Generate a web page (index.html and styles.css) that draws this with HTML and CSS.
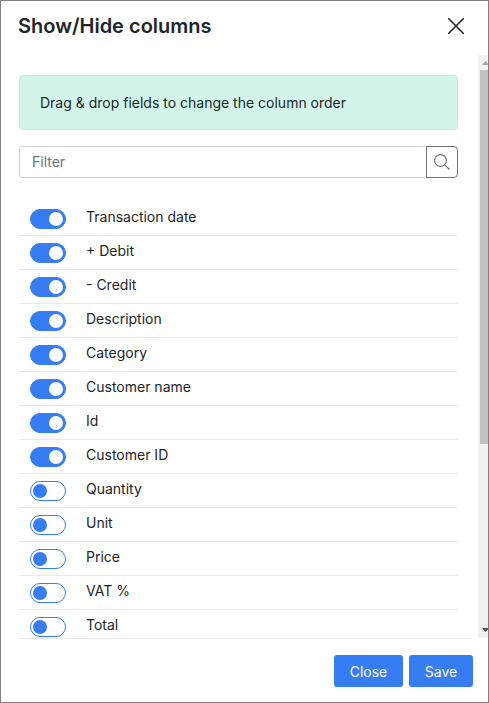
FILE: index.html
```html
<!DOCTYPE html>
<html lang="en">
<head>
<meta charset="utf-8">
<title>Show/Hide columns</title>
<link rel="stylesheet" href="styles.css">
</head>
<body>
<div class="modal">
  <header class="modal-header">
    <h1 class="title">Show/Hide columns</h1>
    <svg class="close-icon" width="16" height="16" viewBox="0 0 16 16" fill="none" stroke="#212529" stroke-width="1.6" stroke-linecap="round"><path d="M.8.8l14.4 14.4M15.2.8L.8 15.2"/></svg>
  </header>
  <div class="modal-body">
    <div class="content">
      <div class="alert">Drag &amp; drop fields to change the column order</div>
      <div class="search">
        <input class="filter" type="text" placeholder="Filter">
        <button class="search-btn" aria-label="Search"><svg width="16" height="16" viewBox="0 0 16 16" fill="none" stroke="#6c757d" stroke-width="1.2"><circle cx="6.5" cy="6.5" r="5.9"/><path d="M10.8 10.8l4.7 4.7"/></svg></button>
      </div>
      <ul class="list">
        <li class="row"><span class="toggle on"></span><span class="label">Transaction date</span></li>
        <li class="row"><span class="toggle on"></span><span class="label">+ Debit</span></li>
        <li class="row"><span class="toggle on"></span><span class="label">- Credit</span></li>
        <li class="row"><span class="toggle on"></span><span class="label">Description</span></li>
        <li class="row"><span class="toggle on"></span><span class="label">Category</span></li>
        <li class="row"><span class="toggle on"></span><span class="label">Customer name</span></li>
        <li class="row"><span class="toggle on"></span><span class="label">Id</span></li>
        <li class="row"><span class="toggle on"></span><span class="label">Customer ID</span></li>
        <li class="row"><span class="toggle"></span><span class="label">Quantity</span></li>
        <li class="row"><span class="toggle"></span><span class="label">Unit</span></li>
        <li class="row"><span class="toggle"></span><span class="label">Price</span></li>
        <li class="row"><span class="toggle"></span><span class="label">VAT %</span></li>
        <li class="row"><span class="toggle"></span><span class="label">Total</span></li>
      </ul>
    </div>
    <div class="scrollbar">
      <svg class="arrow" width="8" height="15" viewBox="0 0 8 15"><path d="M2 10l3.5-4L9 10z" fill="#a3a3a3"/></svg>
      <div class="thumb"></div>
      <svg class="arrow" width="8" height="15" viewBox="0 0 8 15"><path d="M2 5h7l-3.5 4z" fill="#505050"/></svg>
    </div>
  </div>
  <footer class="modal-footer">
    <button class="btn btn-close">Close</button>
    <button class="btn btn-save">Save</button>
  </footer>
</div>
</body>
</html>
```
FILE: styles.css
```css
* { box-sizing: border-box; }
body {
  margin: 0;
  font-family: Inter, "Liberation Sans", sans-serif;
  font-size: 14px;
  color: #212529;
  background: #fff;
}
.modal {
  display: flex;
  flex-direction: column;
  height: 703px;
  border: 1px solid #7f7f7f;
  overflow: hidden;
}
.modal-header {
  display: flex;
  justify-content: space-between;
  align-items: center;
  height: 54px;
  padding: 0 24px 4px 17px;
}
.title { margin: 0; font-size: 20px; font-weight: 600; line-height: 30px; }
.close-icon { display: block; }
.modal-body {
  display: flex;
  justify-content: space-between;
  height: 583px;
  overflow: hidden;
}
.content { width: 457px; padding: 20px 0 0 18px; }
.alert {
  height: 55px;
  padding: 0 20px;
  line-height: 53px;
  background: #d3f5e9;
  border: 1px solid #bdf0de;
  border-radius: 4px;
}
.search { display: flex; height: 32px; margin: 16px 0 24px; }
.filter {
  flex: 1;
  min-width: 0;
  padding: 0 12px 2px;
  font: inherit;
  border: 1px solid #ced4da;
  border-right: 0;
  border-radius: 4px 0 0 4px;
  background: #fff;
}
.filter::placeholder { color: #6c757d; opacity: 1; }
.search-btn {
  display: flex;
  align-items: center;
  justify-content: center;
  width: 32px;
  padding: 0 0 1px;
  background: #fff;
  border: 1px solid #6c757d;
  border-radius: 0 4px 4px 0;
}
.alert, .search, .list { width: 439px; }
.list { margin-top: 0; margin-bottom: 0; padding: 0; list-style: none; }
.row {
  display: flex;
  gap: 20px;
  height: 34px;
  padding: 7px 0 0 11px;
  border-bottom: 1px solid #e9e9e9;
}
.label { line-height: 16px; }
.toggle {
  display: flex;
  align-items: center;
  width: 36px;
  height: 20px;
  padding: 0 2px;
  border: 1px solid #367cf2;
  border-radius: 10px;
}
.toggle::before {
  content: "";
  width: 14px;
  height: 14px;
  border-radius: 50%;
  background: #367cf2;
}
.toggle.on { justify-content: flex-end; background: #367cf2; }
.toggle.on::before { background: #fff; }
.scrollbar {
  display: flex;
  flex-direction: column;
  width: 10px;
  padding-left: 2px;
  background: #f1f1f1;
}
.thumb { height: 374px; margin-bottom: auto; background: #c1c1c1; }
.arrow { display: block; }
.modal-footer {
  display: flex;
  justify-content: flex-end;
  gap: 6px;
  height: 64px;
  margin: 0 15px 0 18px;
  padding-top: 16px;
  border-top: 1px solid #e9e9e9;
}
.btn {
  height: 32px;
  padding: 0;
  font: inherit;
  color: #fff;
  background: #367cf2;
  border: 0;
  border-radius: 3px;
}
.btn-close { width: 69px; }
.btn-save { width: 64px; }
```
